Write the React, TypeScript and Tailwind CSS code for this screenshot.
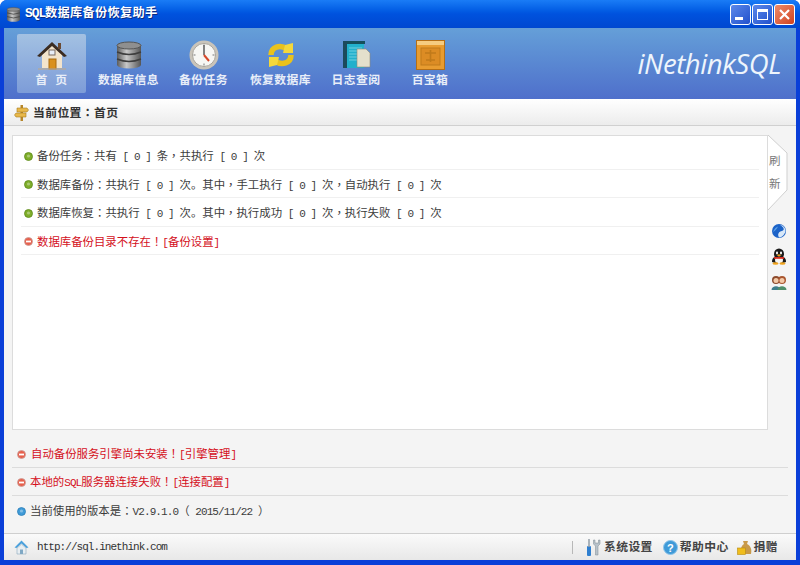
import React from "react";

/* Text helper: ASCII runs are set in a fixed-pitch face, CJK punctuation in a centred form. */
function T({ s, ascii = "text-[11px] tracking-[-0.9px]" }: { s: string; ascii?: string }) {
  const parts = s.split(/([\x20-\x7e]+|[：，！（）]+)/).filter(Boolean);
  return (
    <>
      {parts.map((p, i) =>
        /^[\x20-\x7e]/.test(p) ? (
          <span key={i} className={`font-['Liberation_Mono',monospace] ${ascii}`}>{p}</span>
        ) : /^[：，！（）]/.test(p) ? (
          <span key={i} className="font-['Noto_Sans_CJK_TC',sans-serif]">{p}</span>
        ) : (
          <span key={i}>{p}</span>
        )
      )}
    </>
  );
}

function Dot({ color }: { color: "green" | "red" | "blue" }) {
  const fill = color === "green" ? "#7fae2a" : color === "red" ? "#e8604c" : "#3f9bd8";
  const edge = color === "green" ? "#5d8a1c" : color === "red" ? "#c9a09a" : "#2c7fb8";
  return (
    <svg width="9" height="9" viewBox="0 0 9 9" className="shrink-0">
      <circle cx="4.5" cy="4.5" r="4" fill={fill} stroke={edge} strokeWidth="0.8" />
      {color === "red" ? <rect x="2" y="3.6" width="5" height="1.8" fill="#fff" /> : <circle cx="4.5" cy="4" r="1.6" fill="#fff" opacity="0.35" />}
    </svg>
  );
}

function HomeIcon() {
  return (
    <svg width="32" height="30" viewBox="0 0 32 30">
      <path d="M6 14 L16 5 L26 14 V28 H6Z" fill="#f3e4cc" />
      <path d="M1 16 L16 2 L31 16 L28 17 L16 6 L4 17Z" fill="#3b2c22" />
      <rect x="22" y="3" width="3" height="6" fill="#6b4a32" />
      <rect x="13" y="10" width="6" height="5" fill="#e8eef8" stroke="#7a6a60" />
      <rect x="13" y="19" width="7" height="10" fill="#d9901e" stroke="#a86a10" />
      <rect x="2" y="28" width="28" height="2" fill="#b9a993" opacity="0.6" />
    </svg>
  );
}
function DbIcon({ size = 28, id = "dbg" }: { size?: number; id?: string }) {
  return (
    <svg width={size} height={size} viewBox="0 0 28 28">
      <defs>
        <linearGradient id={id} x1="0" x2="1" y1="0" y2="0">
          <stop offset="0" stopColor="#5c5c5c" />
          <stop offset="0.4" stopColor="#c8c8c8" />
          <stop offset="1" stopColor="#555" />
        </linearGradient>
      </defs>
      <rect x="2" y="4" width="24" height="20" fill={`url(#${id})`} />
      <ellipse cx="14" cy="24" rx="12" ry="3.5" fill={`url(#${id})`} />
      <ellipse cx="14" cy="4.5" rx="12" ry="3.5" fill="#8f8f8f" stroke="#555" />
      <path d="M2 11 Q14 16 26 11 M2 18 Q14 23 26 18" stroke="#3d3d3d" strokeWidth="1.4" fill="none" />
    </svg>
  );
}
function ClockIcon() {
  return (
    <svg width="30" height="30" viewBox="0 0 30 30">
      <circle cx="15" cy="15" r="14.5" fill="#c9c4ba" />
      <circle cx="15" cy="15" r="11.5" fill="#f7f7f4" stroke="#a8a49b" />
      <path d="M15 5 V15" stroke="#333" strokeWidth="1.2" />
      <path d="M15 15 L20 21" stroke="#d6482a" strokeWidth="2" />
      <g fill="#777">
        <rect x="14.5" y="4.5" width="1" height="2" /><rect x="14.5" y="23.5" width="1" height="2" />
        <rect x="4.5" y="14.5" width="2" height="1" /><rect x="23.5" y="14.5" width="2" height="1" />
      </g>
    </svg>
  );
}
function RestoreIcon() {
  return (
    <svg width="26" height="26" viewBox="0 0 26 26" fill="none">
      <path d="M3 13 C3 5 12 2 19 7" stroke="#e9c21c" strokeWidth="5.5" />
      <path d="M23 13 C23 21 14 24 7 19" stroke="#e9c21c" strokeWidth="5.5" />
      <path d="M17 3 L25 1 L25 11 L15 11Z" fill="#f4d83a" />
      <path d="M9 23 L1 25 L1 15 L11 15Z" fill="#f4d83a" />
    </svg>
  );
}
function LogIcon() {
  return (
    <svg width="29" height="29" viewBox="0 0 29 29">
      <rect x="1" y="1" width="21" height="27" fill="#22b0cc" />
      <rect x="1" y="1" width="4" height="27" fill="#1c4a5c" />
      <rect x="5" y="1" width="18" height="3" fill="#154f5c" />
      <path d="M7 8 H20 M7 11 H20 M7 14 H15 M7 17 H15 M7 20 H15" stroke="#7fd8e6" strokeWidth="0.8" />
      <path d="M15 9 H24 L28 13 V27 H15Z" fill="#e4e0cc" stroke="#8d8a78" strokeWidth="0.6" />
    </svg>
  );
}
function BoxIcon() {
  return (
    <svg width="29" height="30" viewBox="0 0 29 30">
      <rect x="0.5" y="0.5" width="28" height="29" fill="#e89c30" stroke="#b56f16" />
      <rect x="1" y="1" width="27" height="4" fill="#f6cc80" />
      <rect x="5" y="8" width="19" height="17" fill="#dc8c24" stroke="#c07a1a" />
      <path d="M9 13 H20 M14.5 10 V22 M10 20 H19" stroke="#c07a1a" strokeWidth="1.6" />
    </svg>
  );
}
function Globe() {
  return (
    <svg width="16" height="16" viewBox="0 0 16 16">
      <circle cx="8" cy="8" r="7" fill="#1c63c8" />
      <path d="M9 2 C13 4 14 7 11 8 C8 8.5 6 11 8 14.5 C11 14.5 14 11 14.5 8 C14.5 5 12 2 9 2Z" fill="#d8e8f8" />
      <path d="M2 9 C3 6 5 4 7 3.5 C6 6 4 8 2 9Z" fill="#5aa0e8" />
    </svg>
  );
}
function Penguin() {
  return (
    <svg width="16" height="17" viewBox="0 0 16 17">
      <ellipse cx="8" cy="6" rx="5" ry="5.5" fill="#1a1a1a" />
      <path d="M1 14 C1 9 4 8 8 8 C12 8 15 9 15 14 L12 15 H4Z" fill="#1a1a1a" />
      <ellipse cx="8" cy="12" rx="4" ry="3.2" fill="#f4f4f4" />
      <ellipse cx="6" cy="5" rx="1" ry="1.4" fill="#fff" />
      <ellipse cx="10" cy="5" rx="1" ry="1.4" fill="#fff" />
      <path d="M5.5 7 L8 8.5 L10.5 7 L8 6.2Z" fill="#f0a31c" />
      <rect x="3" y="9" width="10" height="1.8" fill="#d92a1c" />
      <ellipse cx="4.5" cy="15.5" rx="3" ry="1.3" fill="#f0a31c" />
      <ellipse cx="11.5" cy="15.5" rx="3" ry="1.3" fill="#f0a31c" />
    </svg>
  );
}
function Users() {
  return (
    <svg width="16" height="16" viewBox="0 0 16 16">
      <circle cx="5" cy="6" r="4" fill="#8c4a2c" />
      <circle cx="11" cy="6" r="4" fill="#a8552e" />
      <circle cx="5" cy="6.5" r="2.5" fill="#f2c9a8" />
      <circle cx="11" cy="6.5" r="2.5" fill="#f2c9a8" />
      <path d="M0.5 16 C0.5 11 9.5 11 9.5 16Z" fill="#3f7d8c" />
      <path d="M6.5 16 C6.5 11 15.5 11 15.5 16Z" fill="#4f8f6a" />
    </svg>
  );
}
function SignPost() {
  return (
    <svg width="15" height="16" viewBox="0 0 15 16">
      <rect x="6.5" y="0" width="2.5" height="16" fill="#b6862a" />
      <path d="M3 3 H13 L14.5 5 L13 7 H3Z" fill="#e8b84a" stroke="#a87c20" strokeWidth="0.6" />
      <path d="M12 8 H2 L0.5 10 L2 12 H12Z" fill="#e8b84a" stroke="#a87c20" strokeWidth="0.6" />
    </svg>
  );
}
function HouseBlue() {
  return (
    <svg width="15" height="15" viewBox="0 0 15 15">
      <path d="M0.5 7.5 L7.5 0.5 L14.5 7.5 L12.5 8 L7.5 3.5 L2.5 8Z" fill="#4aa0dc" />
      <path d="M3 8 L7.5 4.2 L12 8 V14 H3Z" fill="#e8eef2" stroke="#8aa8bc" strokeWidth="0.6" />
      <rect x="6" y="9.5" width="3" height="4.5" fill="#7fa8c4" />
    </svg>
  );
}
function Wrench() {
  return (
    <svg width="16" height="17" viewBox="0 0 16 17">
      <rect x="2" y="7" width="4" height="10" rx="1" fill="#2f7fd0" />
      <rect x="3.2" y="0" width="1.6" height="8" fill="#9aa4ac" />
      <path d="M8.5 1 V5 L10.5 7 V16 H13 V7 L15 5 V1 L13.5 1 V4 H10 V1Z" fill="#b8c2ca" stroke="#7d8890" strokeWidth="0.5" />
    </svg>
  );
}
function Help() {
  return (
    <svg width="15" height="15" viewBox="0 0 15 15">
      <circle cx="7.5" cy="7.5" r="7" fill="#3f9ad8" stroke="#8cc4ea" />
      <text x="7.5" y="11.5" textAnchor="middle" fontSize="11" fontWeight="700" fill="#fff" fontFamily="Liberation Sans">?</text>
    </svg>
  );
}
function MoneyBag() {
  return (
    <svg width="15" height="15" viewBox="0 0 15 15">
      <path d="M6 1 H11 L10 4 C14 6 15 10 14 14 H4 C3 10 4 6 7 4Z" fill="#c99a4a" />
      <rect x="0.5" y="8" width="8" height="6.5" fill="#f0bd1c" stroke="#b88a10" strokeWidth="0.6" />
    </svg>
  );
}

const tools: { label: string; icon: React.ReactNode; width: string; active?: boolean }[] = [
  { label: "首  页", icon: <HomeIcon />, width: "w-[69px]", active: true },
  { label: "数据库信息", icon: <DbIcon />, width: "w-[85px]" },
  { label: "备份任务", icon: <ClockIcon />, width: "w-[65px]" },
  { label: "恢复数据库", icon: <RestoreIcon />, width: "w-[89px]" },
  { label: "日志查阅", icon: <LogIcon />, width: "w-[62px]" },
  { label: "百宝箱", icon: <BoxIcon />, width: "w-[86px]" },
];

function Row({ color, s, red }: { color: "green" | "red" | "blue"; s: string; red?: boolean }) {
  return (
    <div className={`h-[28.5px] flex items-center gap-[4px] pl-[3px] pt-[3px] border-b border-[#f0f0f0] text-[11.4px] whitespace-pre ${red ? "text-[#d4101c]" : "text-[#3c3c3c]"}`}>
      <Dot color={color} />
      <span><T s={s} /></span>
    </div>
  );
}

function BottomRow({ color, s, red, last, gap }: { color: "red" | "blue"; s: string; red?: boolean; last?: boolean; gap: string }) {
  return (
    <div className={`h-[28px] flex items-center ${gap} pl-[5px] pt-[2px] text-[11.4px] whitespace-pre ${last ? "" : "border-b border-[#dcdcdc]"} ${red ? "text-[#d4101c]" : "text-[#3c3c3c]"}`}>
      <Dot color={color} />
      <span><T s={s} /></span>
    </div>
  );
}

export default function App() {
  return (
    <div className="w-[800px] h-[565px] overflow-hidden bg-white font-['Liberation_Sans','Noto_Sans_CJK_SC',sans-serif]">
      <div className="w-full h-full flex flex-col rounded-t-[7px] overflow-hidden bg-[#0a3fd8]">
        {/* title bar */}
        <div className="h-[28px] shrink-0 flex items-center bg-gradient-to-b from-[#1a7cf6] via-[#0052de] to-[#0048d0] pl-[6px] pr-[5px]">
          <DbIcon size={15} id="dbs" />
          <span className="ml-[4px] text-white text-[12.2px] font-bold tracking-[0.3px] [text-shadow:1px_1px_0_#0a2a80]"><T s="SQL数据库备份恢复助手" ascii="text-[13px] tracking-[-1.1px]" /></span>
          <div className="ml-auto flex gap-[1px]">
            <div className="w-[21px] h-[21px] rounded-[3px] border border-white bg-gradient-to-br from-[#5c88ea] to-[#2250cc] flex items-end p-[4px]">
              <div className="w-[8px] h-[3px] bg-white" />
            </div>
            <div className="w-[21px] h-[21px] rounded-[3px] border border-white bg-gradient-to-br from-[#5c88ea] to-[#2250cc] p-[4px]">
              <div className="w-full h-full border border-white border-t-[3px]" />
            </div>
            <div className="w-[21px] h-[21px] rounded-[3px] border border-white bg-gradient-to-br from-[#ee8a68] to-[#d0401c] flex items-center justify-center">
              <svg width="13" height="13" viewBox="0 0 13 13"><path d="M2 2 L11 11 M11 2 L2 11" stroke="#fff" strokeWidth="2.2" /></svg>
            </div>
          </div>
        </div>

        <div className="flex-1 min-h-0 mx-[4px] flex flex-col bg-[#f4f4f4]">
          {/* toolbar */}
          <div className="h-[71px] shrink-0 flex items-center pl-[13px] pr-[15px] bg-gradient-to-b from-[#659fd8] to-[#4f6fcb]">
            <div className="flex items-stretch h-[59px]">
              {tools.map((t) => (
                <div
                  key={t.label}
                  className={`${t.width} flex flex-col items-center justify-between pt-[5px] pb-[3px] rounded-[2px] ${t.active ? "bg-gradient-to-b from-[#a3c1e2] to-[#7d9cd8]" : ""}`}
                >
                  <div className="h-[31px] flex items-center justify-center">{t.icon}</div>
                  <span className="text-[11.8px] font-bold text-[#e8eef8] tracking-[0.45px] whitespace-pre">{t.label}</span>
                </div>
              ))}
            </div>
            <span className="ml-auto font-['Open_Sans',sans-serif] italic text-[27.5px] text-[#eef5fc] tracking-[-0.4px]">iNethinkSQL</span>
          </div>

          {/* breadcrumb */}
          <div className="h-[27px] shrink-0 flex items-center gap-[4px] pl-[10px] pt-[2px] border-b border-[#d0d0d0] bg-gradient-to-b from-white to-[#ececec]">
            <SignPost />
            <span className="text-[11.8px] font-bold text-[#333] tracking-[0.4px]"><T s="当前位置：首页" /></span>
          </div>

          {/* content */}
          <div className="flex-1 min-h-0 flex flex-col px-[8px]">
            <div className="flex mt-[9px] h-[295px] shrink-0">
              <div className="w-[756px] shrink-0 bg-white border border-[#dcdcdc] pt-[5px] px-[8px]">
                <Row color="green" s="备份任务：共有 [ 0 ] 条，共执行 [ 0 ] 次" />
                <Row color="green" s="数据库备份：共执行 [ 0 ] 次。其中，手工执行 [ 0 ] 次，自动执行 [ 0 ] 次" />
                <Row color="green" s="数据库恢复：共执行 [ 0 ] 次。其中，执行成功 [ 0 ] 次，执行失败 [ 0 ] 次" />
                <Row color="red" red s="数据库备份目录不存在！[备份设置]" />
              </div>
              <div className="flex-1 flex flex-col items-start">
                <div className="relative w-[20px] h-[75px] flex flex-col items-start pl-[1px] pt-[19px] gap-[8px] text-[11.5px] leading-[15px] text-[#777]">
                  <svg width="20" height="75" viewBox="0 0 20 75" className="absolute inset-0">
                    <path d="M0 0 L19 18 V55 L0 75" fill="#fff" stroke="#cfcfcf" />
                  </svg>
                  <span className="relative">刷</span>
                  <span className="relative">新</span>
                </div>
                <div className="flex flex-col items-center gap-[9px] mt-[13px] ml-[3px]">
                  <Globe />
                  <Penguin />
                  <Users />
                </div>
              </div>
            </div>

            <div className="mt-[10px]">
              <BottomRow color="red" red gap="gap-[5px]" s="自动备份服务引擎尚未安装！[引擎管理]" />
              <BottomRow color="red" red gap="gap-[4px]" s="本地的SQL服务器连接失败！[连接配置]" />
              <BottomRow color="blue" last gap="gap-[4px]" s="当前使用的版本是：V2.9.1.0（ 2015/11/22 ）" />
            </div>
          </div>

          {/* status bar */}
          <div className="h-[27px] shrink-0 flex items-center pl-[10px] pr-[18px] pt-[1px] border-t border-[#cfcfcf] bg-gradient-to-b from-[#fafafa] to-[#e8e8e8]">
            <HouseBlue />
            <span className="ml-[8px] font-['Liberation_Mono',monospace] text-[11px] tracking-[-0.95px] text-[#333]">http://sql.inethink.com</span>
            <div className="ml-auto w-px h-[13px] bg-[#b8b8b8] mr-[12px]" />
            <div className="flex items-center text-[11.8px] font-bold text-[#444] tracking-[0.4px]">
              <Wrench />
              <span className="ml-[3px]">系统设置</span>
              <span className="ml-[10px]"><Help /></span>
              <span className="ml-[2px]">帮助中心</span>
              <span className="ml-[8px]"><MoneyBag /></span>
              <span className="ml-[2px]">捐赠</span>
            </div>
          </div>
        </div>
        <div className="h-[5px] shrink-0" />
      </div>
    </div>
  );
}
